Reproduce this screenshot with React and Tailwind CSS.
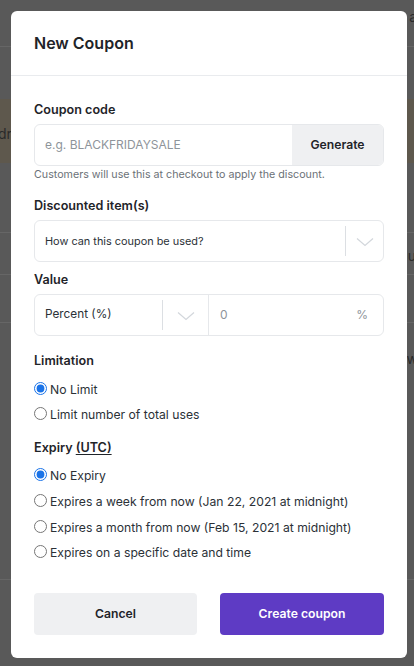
import React from "react";

function Chevron() {
  return (
    <svg width="18" height="10" viewBox="0 0 18 10" fill="none">
      <path d="M1 1.5L9 8.5L17 1.5" stroke="#d3d7dc" strokeWidth="1.2" />
    </svg>
  );
}

function Radio({ label, checked, name }) {
  return (
    <label className="flex items-center h-[25px] text-[12.2px] text-[#2b3137]">
      <input
        type="radio"
        name={name}
        defaultChecked={checked}
        className="m-0 w-[13px] h-[13px] mr-[3px] -translate-y-[2px] accent-[#1a73e8]"
      />
      <span>{label}</span>
    </label>
  );
}

function Label({ children, className }) {
  return (
    <div className={"text-[12.6px] font-semibold text-[#1f2429] leading-[20px] " + className}>{children}</div>
  );
}

export default function App() {
  return (
    <div
      className="relative w-[414px] h-[666px] overflow-hidden bg-[#595959]"
      style={{ fontFamily: "Inter, 'Noto Sans', sans-serif" }}
    >
      {/* background page (dimmed) */}
      <div className="flex flex-col text-[14px] text-[#2a2a2a]">
        <div className="h-[47px] border-b border-[#666] flex justify-end items-start pt-[6px]">
          <span className="mr-[-3px]">a</span>
        </div>
        <div className="h-[52px]" />
        <div className="h-[64px] bg-[#5e584d] flex items-center">
          <span className="ml-[-2px] mt-[4px]">dr</span>
        </div>
        <div className="h-[70px] border-b border-[#666]" />
        <div className="h-[42px] border-b border-[#666] flex justify-end items-center">
          <span className="mr-[-2px] mt-[4px]">u</span>
        </div>
        <div className="h-[48px] border-b border-[#666]" />
        <div className="h-[257px] border-b border-[#666] flex justify-end items-start pt-[25px]">
          <span className="mr-[-4px]">w</span>
        </div>
        <div className="h-[86px]" />
      </div>

      {/* modal */}
      <div className="absolute top-[11px] left-[11px] w-[396px] h-[647px] rounded-[6px] bg-white flex flex-col">
        <div className="h-[65px] border-b border-[#e9ebee] flex items-center px-[23px]">
          <h2 className="text-[16px] font-semibold text-[#1f2429]">New Coupon</h2>
        </div>

        <div className="flex flex-col px-[23px] pt-[24px]">
          <Label className="mb-[4px]">Coupon code</Label>
          <div className="flex h-[42px] rounded-[6px] border border-[#e6e8eb] overflow-hidden">
            <div className="flex-1 flex items-center pl-[10px] text-[12px] text-[#8e949a]">e.g. BLACKFRIDAYSALE</div>
            <button className="w-[91px] bg-[#eff0f2] text-[12.2px] font-semibold text-[#1f2429]">Generate</button>
          </div>
          <div className="mt-[1px] text-[10.7px] leading-[16px] text-[#6b7177]">
            Customers will use this at checkout to apply the discount.
          </div>

          <Label className="mt-[13px] mb-[4px]">Discounted item(s)</Label>
          <div className="flex h-[42px] rounded-[6px] border border-[#e6e8eb] items-center">
            <div className="flex-1 pl-[10px] text-[10.9px] text-[#2b3137]">How can this coupon be used?</div>
            <div className="w-px h-[30px] bg-[#dcdfe3]" />
            <div className="w-[37px] flex justify-center pt-[2px]">
              <Chevron />
            </div>
          </div>

          <Label className="mt-[8px] mb-[4px]">Value</Label>
          <div className="flex h-[42px] rounded-[6px] border border-[#e6e8eb]">
            <div className="w-[174px] flex items-center border-r border-[#e6e8eb]">
              <div className="flex-1 pl-[10px] text-[11.8px] text-[#2b3137]">Percent (%)</div>
              <div className="w-px h-[30px] bg-[#dcdfe3]" />
              <div className="w-[45px] flex justify-center pt-[2px]">
                <Chevron />
              </div>
            </div>
            <div className="flex-1 flex items-center pl-[11px] pr-[15px] text-[12px] text-[#8e949a]">
              <span className="flex-1">0</span>
              <span>%</span>
            </div>
          </div>

          <Label className="mt-[15px] mb-[7px]">Limitation</Label>
          <Radio name="limit" label="No Limit" checked />
          <Radio name="limit" label="Limit number of total uses" />

          <Label className="mt-[10px] mb-[6px]">
            Expiry <span className="underline underline-offset-2">(UTC)</span>
          </Label>
          <Radio name="exp" label="No Expiry" checked />
          <div className="h-px" />
          <Radio name="exp" label="Expires a week from now (Jan 22, 2021 at midnight)" />
          <div className="h-px" />
          <Radio name="exp" label="Expires a month from now (Feb 15, 2021 at midnight)" />
          <Radio name="exp" label="Expires on a specific date and time" />

          <div className="mt-[27px] flex gap-[23px]">
            <button className="w-[163px] h-[42px] rounded-[4px] bg-[#eff0f2] text-[12.2px] font-semibold text-[#1f2429]">Cancel</button>
            <button className="w-[164px] h-[42px] rounded-[4px] bg-[#5e3bc4] text-[12.2px] font-semibold text-white">Create coupon</button>
          </div>
        </div>
      </div>
    </div>
  );
}
